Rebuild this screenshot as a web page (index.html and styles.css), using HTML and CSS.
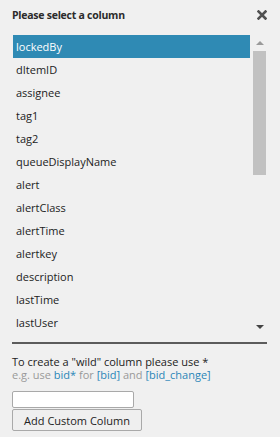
FILE: index.html
```html
<!DOCTYPE html>
<html>
<head>
<meta charset="utf-8">
<link rel="stylesheet" href="styles.css">
</head>
<body>
<div class="dialog">
  <div class="header">
    <span class="title">Please select a column</span>
    <svg class="close" width="10" height="10" viewBox="0 0 10 10"><path d="M1.5 1.5 L8.5 8.5 M8.5 1.5 L1.5 8.5" stroke="#505050" stroke-width="2.6" stroke-linecap="square"/></svg>
  </div>
  <div class="listbox">
    <div class="items">
      <div class="item selected">lockedBy</div>
      <div class="item">dItemID</div>
      <div class="item">assignee</div>
      <div class="item">tag1</div>
      <div class="item">tag2</div>
      <div class="item">queueDisplayName</div>
      <div class="item">alert</div>
      <div class="item">alertClass</div>
      <div class="item">alertTime</div>
      <div class="item">alertkey</div>
      <div class="item">description</div>
      <div class="item">lastTime</div>
      <div class="item">lastUser</div>
    </div>
    <div class="scrollbar">
      <div class="arrow up"></div>
      <div class="track"><div class="thumb"></div></div>
      <div class="arrow down"></div>
    </div>
  </div>
  <div class="help">
    <div>To create a "wild" column please use *</div>
    <div class="muted">e.g. use <span class="link">bid*</span> for <span class="link">[bid]</span> and <span class="link">[bid_change]</span></div>
  </div>
  <input class="field" type="text">
  <button class="btn">Add Custom Column</button>
</div>
</body>
</html>
```
FILE: styles.css
```css
html, body {
  margin: 0;
  padding: 0;
  background: #f0f0f0;
}
.dialog {
  width: 280px;
  height: 437px;
  padding: 0 12px;
  box-sizing: border-box;
  font-family: "Open Sans", "Noto Sans", sans-serif;
  font-size: 11px;
  color: #222;
  display: flex;
  flex-direction: column;
}
.header {
  height: 30px;
  display: flex;
  align-items: center;
  justify-content: space-between;
}
.title {
  font-family: "Open Sans", sans-serif;
  font-weight: bold;
  font-size: 10.5px;
  letter-spacing: -0.25px;
  color: #2b2b2b;
}
.close {
  display: block;
  margin-right: 1px;
}
.listbox {
  margin-top: 5px;
  width: 255px;
  height: 309px;
  display: flex;
  border-bottom: 2px solid #5c5c5c;
  padding-left: 1px;
  box-sizing: border-box;
}
.items {
  width: 237px;
  overflow: hidden;
}
.item {
  height: 23px;
  line-height: 23px;
  padding-left: 3px;
  white-space: nowrap;
}
.item.selected {
  background: #2f8ab4;
  color: #fff;
}
.scrollbar {
  width: 13px;
  margin-left: 3px;
  display: flex;
  flex-direction: column;
  align-items: center;
}
.arrow {
  width: 0;
  height: 0;
  border-left: 4px solid transparent;
  border-right: 4px solid transparent;
}
.arrow.up {
  margin-top: 6px;
  border-bottom: 4px solid #9a9a9a;
}
.arrow.down {
  border-top: 4px solid #444;
  margin-bottom: 13px;
}
.track {
  flex: 1;
  width: 13px;
  padding-top: 6px;
}
.thumb {
  height: 124px;
  background: #c1c1c1;
}
.help {
  margin-top: 12px;
  line-height: 12.5px;
  font-size: 11px;
}
.muted { color: #999; }
.link { color: #2a86b8; }
.field {
  margin: 10px 0 0 0;
  width: 122px;
  height: 17px;
  box-sizing: border-box;
  border: 1px solid #a9a9a9;
  border-radius: 2px;
  background: #fff;
  padding: 0;
}
.btn {
  margin: 1px 0 0 0;
  width: 130px;
  height: 22px;
  box-sizing: border-box;
  border: 1px solid #a9a9a9;
  border-radius: 2px;
  background: #efefef;
  font-family: "Open Sans", "Noto Sans", sans-serif;
  font-size: 11px;
  color: #222;
  padding: 0;
  align-self: flex-start;
}
```
